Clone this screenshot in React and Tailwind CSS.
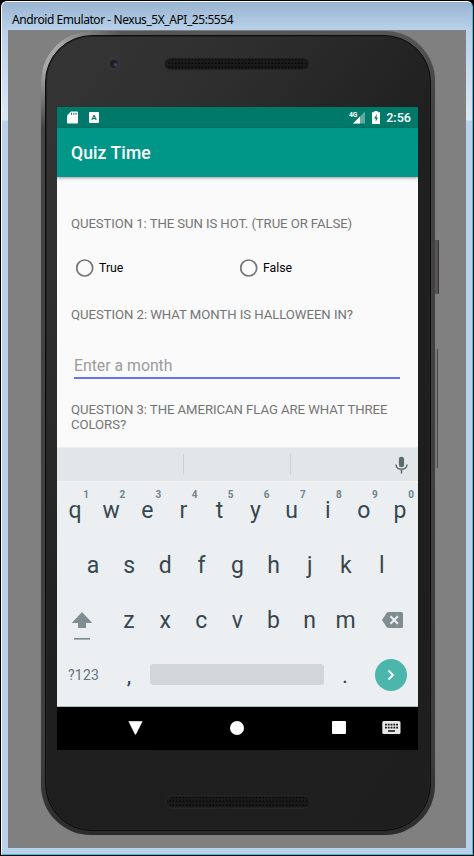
const NUMBER_ROW = [
  ["q", "1"], ["w", "2"], ["e", "3"], ["r", "4"], ["t", "5"],
  ["y", "6"], ["u", "7"], ["i", "8"], ["o", "9"], ["p", "0"],
];
const HOME_ROW = ["a", "s", "d", "f", "g", "h", "j", "k", "l"];
const BOTTOM_ROW = ["z", "x", "c", "v", "b", "n", "m"];

function Speaker({ id }) {
  return (
    <svg className="block h-[14px] w-[146px]" viewBox="0 0 146 14">
      <defs>
        <pattern id={id} width="3.33" height="4" patternUnits="userSpaceOnUse">
          <rect x="1" y="1.6" width="1.5" height="1.5" fill="#050505" />
        </pattern>
      </defs>
      <rect x=".5" y="1" width="145" height="12" rx="6" fill="#1a1a1a" stroke="#303030" strokeWidth="0.7" />
      <rect x="4" y="2" width="138" height="10" rx="4" fill={`url(#${id})`} />
    </svg>
  );
}

function StatusBar() {
  return (
    <div className="flex h-[21px] shrink-0 items-center bg-[#00796b] text-white">
      <svg className="ml-[10px] h-[13px] w-[11px]" viewBox="0 0 11 13">
        <path d="M4 .5h6q1 0 1 1v10q0 1-1 1H1q-1 0-1-1V4.5z" fill="#fff" />
        <path d="M4.5 1.8v2M6.8 1.8v2M9 1.8v2" stroke="#00796b" strokeWidth="1" />
      </svg>
      <div className="ml-[11px] flex h-[10.5px] w-[10px] items-center justify-center rounded-[1px] bg-white text-[8px] font-bold leading-none text-[#00796b]">
        A
      </div>
      <svg className="ml-auto h-[13px] w-[17px]" viewBox="0 0 17 13">
        <path d="M16 .5v12H4z" fill="#5faaa1" />
        <path d="M11 5.5v7H4z" fill="#fff" />
        <text x="0" y="6" fill="#fff" fontSize="6.8" fontWeight="700" letterSpacing="-.2">4G</text>
      </svg>
      <svg className="ml-[6px] h-[13px] w-[8px]" viewBox="0 0 8 13">
        <path d="M2.3 0h3.4v1.3H8V13H0V1.3h2.3z" fill="#fff" />
        <path d="M5 3L2 7.6h1.7v3.2L6 6.4H4.4z" fill="#00796b" />
      </svg>
      <span className="ml-[6px] mr-[7px] mt-px text-[12.6px] font-medium leading-none">2:56</span>
    </div>
  );
}

function Radio({ label }) {
  return (
    <label className="flex w-[164px] items-center gap-[5px]">
      <svg className="h-[18px] w-[18px]" viewBox="0 0 18 18">
        <circle cx="8.7" cy="9" r="8" fill="none" stroke="#757575" strokeWidth="1.700" />
      </svg>
      <span className="pt-[2px] text-[12.3px] leading-none text-black">{label}</span>
    </label>
  );
}

function Quiz() {
  return (
    <div className="h-[270px] shrink-0 overflow-hidden bg-[#fafafa] px-[14px] text-[13.17px] leading-[15.5px] text-[#757575]">
      <p className="mt-[38.500px] tracking-[-0.080px]">QUESTION 1: THE SUN IS HOT. (TRUE OR FALSE)</p>
      <div className="mt-[27.500px] flex pl-[5px]">
        <Radio label="True" />
        <Radio label="False" />
      </div>
      <p className="mt-[30px] tracking-[-0.050px]">QUESTION 2: WHAT MONTH IS HALLOWEEN IN?</p>
      <div className="ml-[3px] mr-[4px] mt-[32.500px] h-[24px] border-b-2 border-[#6675ee] text-[15.8px] leading-[21px] text-[#9c9c9c]">
        Enter a month
      </div>
      <p className="mt-[23px] tracking-[-0.060px]">QUESTION 3: THE AMERICAN FLAG ARE WHAT THREE COLORS?</p>
    </div>
  );
}

function Key({ label, hint }) {
  return (
    <div className="relative flex h-[55px] w-[36.1px] items-center justify-center pt-[2px] text-[23px] leading-none text-[#37474f]">
      {label}
      {hint && (
        <span className="absolute right-[4px] top-[8px] text-[10px] font-bold leading-none text-[#74838a]">{hint}</span>
      )}
    </div>
  );
}

function Keyboard() {
  return (
    <div className="flex flex-col border-t border-[#eeeff0] bg-[#ebeff2]">
      <div className="flex h-[34px] items-center border-b border-[#f3f5f7] bg-[#e2e6e9]">
        <div className="h-[21px] w-[127px] border-r border-[#cdd2d4]" />
        <div className="h-[21px] w-[107px] border-r border-[#cdd2d4]" />
        <svg className="ml-auto mr-[10px] h-[18px] w-[13px]" viewBox="0 0 13 18">
          <rect x="3.9" y=".7" width="5.2" height="10.6" rx="2.4" fill="#5c6b70" />
          <path d="M1 8.6c0 6.3 11 6.3 11 0M6.5 13.5v4" fill="none" stroke="#5c6b70" strokeWidth="1.5" />
        </svg>
      </div>
      <div className="flex">
        {NUMBER_ROW.map(([label, hint]) => <Key key={label} label={label} hint={hint} />)}
      </div>
      <div className="flex justify-center">
        {HOME_ROW.map((label) => <Key key={label} label={label} />)}
      </div>
      <div className="flex">
        <div className="flex w-[54px] flex-col items-center pt-[19px]">
          <svg className="ml-[-4px] h-[29px] w-[22px]" viewBox="0 0 22 29">
            <path d="M11 1L21.3 12H15v5H7v-5H.7z" fill="#7f8c90" />
            <path d="M3 27.8h16" stroke="#7f8c90" strokeWidth="1.7" />
          </svg>
        </div>
        {BOTTOM_ROW.map((label) => <Key key={label} label={label} />)}
        <div className="flex flex-1 items-center justify-center">
          <svg className="ml-[5px] h-[16px] w-[22px]" viewBox="0 0 22 16">
            <path d="M6.3 0H19.500q1.500 0 1.500 1.500v13q0 1.500-1.500 1.500H6.300q-1 0-1.700-1L0 8l4.600-7q.7-1 1.700-1z" fill="#7f8c90" />
            <path d="M8.500 4.200l7.400 7.600M15.900 4.200l-7.400 7.600" stroke="#ebeff2" strokeWidth="2" />
          </svg>
        </div>
      </div>
      <div className="flex h-[60px] border-b border-[#b4b8ba] text-[#37474f]">
        <div className="w-[54px] pl-[11px] pt-[19px] text-[14px] leading-[18px] tracking-[0.200px] text-[#65747a]">?123</div>
        <div className="w-[36px] pt-[15px] text-center text-[22.6px] leading-[28px]">,</div>
        <div className="mx-[3px] mt-[17px] h-[21px] w-[174px] rounded-[3px] bg-[#d1d6d9]" />
        <div className="w-[36px] pt-[15px] text-center text-[22.6px] leading-[28px]">.</div>
        <div className="ml-[11.500px] mt-[12px] flex h-[32px] w-[32px] items-center justify-center rounded-full bg-[#4db6ac]">
          <svg className="h-[12px] w-[8px]" viewBox="0 0 8 12">
            <path d="M1.500 1.500L6 6l-4.500 4.500" fill="none" stroke="#fff" strokeWidth="1.800" />
          </svg>
        </div>
      </div>
    </div>
  );
}

function NavBar() {
  return (
    <div className="flex h-[43px] shrink-0 items-center bg-black pb-[2px]">
      <svg className="ml-[71px] h-[14px] w-[15px]" viewBox="0 0 15 14">
        <path d="M.8.500h13.400L7.800 13.200h-.6z" fill="#fff" stroke="#fff" strokeLinejoin="round" strokeWidth=".6" />
      </svg>
      <span className="ml-[87px] h-[14px] w-[14px] rounded-full bg-white" />
      <span className="ml-[88px] h-[13px] w-[13.500px] rounded-[1px] bg-white" />
      <svg className="ml-[36.500px] h-[13px] w-[19px]" viewBox="0 0 19 13">
        <rect x=".3" width="18.200" height="13" rx="1.500" fill="#e8e8e8" />
        <path d="M3 3.700h13M3 6.600h13" stroke="#111" strokeWidth="1.700" strokeDasharray="1.800 1" />
        <path d="M6 10h7" stroke="#111" strokeWidth="1.500" />
      </svg>
    </div>
  );
}

export default function App() {
  return (
    <div className="h-[856px] w-[474px] overflow-hidden bg-black font-['Roboto',sans-serif]">
      <div className="ml-px mt-px flex h-[854px] w-[472px] flex-col rounded-t-[6px] border border-b-[1.500px] border-l-white border-t-white border-r-[#2cc7ee] border-b-[#2cc7de] bg-[linear-gradient(to_bottom,#99b4d4_0px,#b9d1ea_28px,#dce8f5_118px,#b9d1ea_119px,#b9d1ea_100%)] px-[6px] pb-[6px]">
        <div className="h-[28px] shrink-0 whitespace-nowrap bg-[linear-gradient(to_bottom,#99b4d1,#b9d1ea)] pl-[4px] font-['Noto_Sans',sans-serif] text-[12px] leading-[35px] tracking-[-0.440px] text-black">
          Android Emulator - Nexus_5X_API_25:5554
        </div>
        <div className="relative flex-1 bg-[#808080] pl-[33px] pt-px">
          <span className="absolute left-[427px] top-[210px] h-[54px] w-[4px] rounded-r-[1px] border-r border-[#353333] bg-[#555]" />
          <span className="absolute left-[427px] top-[319px] h-[119px] w-[3px] border-r border-[#4b4b4b] bg-[#777]" />
          <div className="relative h-[804px] w-[394px] rounded-[50px] bg-[linear-gradient(to_bottom,#565656_0%,#454344_8%,#3f3d3e_90%,#2c2a2b_100%)] p-[4px] shadow-[0_0_1px_#666]">
            <div className="absolute inset-0 rounded-[50px] bg-[radial-gradient(circle_at_14px_28px,#a6a6a6_0px,#a6a6a6_15px,transparent_70px)]" />
            <div className="relative h-full w-full rounded-[47px] border border-[#0c0c0c] bg-[linear-gradient(125deg,#353536_0%,#2f2f30_20%,#1f1f20_48%,#1e1e1f_100%)] pl-[11px] pt-[19px] shadow-[inset_0_0_0_1px_#242324]">
              <div className="flex h-[52px] items-start">
                <span className="ml-[49px] mt-px flex h-[15px] w-[15px] items-center justify-center rounded-full bg-[#363637]">
                  <span className="h-[8px] w-[8px] rounded-full bg-[radial-gradient(circle_at_70%_60%,#665064_0%,#201c2b_35%,#171720_100%)]" />
                </span>
                <div className="ml-[43px] mt-[2px]"><Speaker id="earpiece" /></div>
              </div>
              <div className="flex h-[643px] w-[361px] flex-col overflow-hidden">
                <StatusBar />
                <div className="relative flex h-[49px] shrink-0 items-center bg-[#009688] pl-[14px] pt-[2px] text-[17.550px] font-medium tracking-[0.100px] text-white shadow-[0_1px_3px_rgba(0,0,0,.4)]">
                  Quiz Time
                </div>
                <Quiz />
                <Keyboard />
                <NavBar />
              </div>
              <div className="ml-[108px] mt-[45px]"><Speaker id="loudspeaker" /></div>
            </div>
          </div>
        </div>
      </div>
    </div>
  );
}
